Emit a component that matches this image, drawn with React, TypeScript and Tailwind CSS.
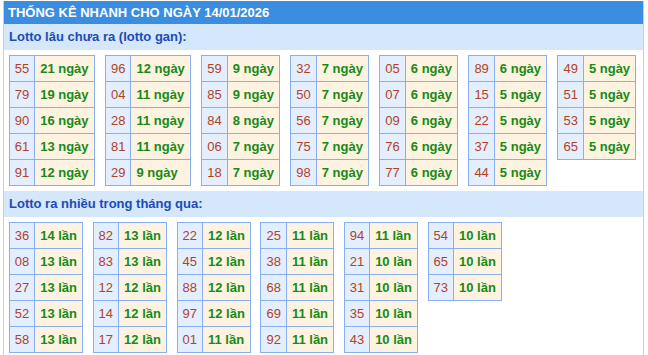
const gan: [string, string][][] = [
  [["55", "21 ngày"], ["79", "19 ngày"], ["90", "16 ngày"], ["61", "13 ngày"], ["91", "12 ngày"]],
  [["96", "12 ngày"], ["04", "11 ngày"], ["28", "11 ngày"], ["81", "11 ngày"], ["29", "9 ngày"]],
  [["59", "9 ngày"], ["85", "9 ngày"], ["84", "8 ngày"], ["06", "7 ngày"], ["18", "7 ngày"]],
  [["32", "7 ngày"], ["50", "7 ngày"], ["56", "7 ngày"], ["75", "7 ngày"], ["98", "7 ngày"]],
  [["05", "6 ngày"], ["07", "6 ngày"], ["09", "6 ngày"], ["76", "6 ngày"], ["77", "6 ngày"]],
  [["89", "6 ngày"], ["15", "5 ngày"], ["22", "5 ngày"], ["37", "5 ngày"], ["44", "5 ngày"]],
  [["49", "5 ngày"], ["51", "5 ngày"], ["53", "5 ngày"], ["65", "5 ngày"]],
];

const nhieu: [string, string][][] = [
  [["36", "14 lần"], ["08", "13 lần"], ["27", "13 lần"], ["52", "13 lần"], ["58", "13 lần"]],
  [["82", "13 lần"], ["83", "13 lần"], ["12", "12 lần"], ["14", "12 lần"], ["17", "12 lần"]],
  [["22", "12 lần"], ["45", "12 lần"], ["88", "12 lần"], ["97", "12 lần"], ["01", "11 lần"]],
  [["25", "11 lần"], ["38", "11 lần"], ["68", "11 lần"], ["69", "11 lần"], ["92", "11 lần"]],
  [["94", "11 lần"], ["21", "10 lần"], ["31", "10 lần"], ["35", "10 lần"], ["43", "10 lần"]],
  [["54", "10 lần"], ["65", "10 lần"], ["73", "10 lần"]],
];

function LotoTable({ rows }: { rows: [string, string][] }) {
  return (
    <table className="border-collapse border border-[#88aff0]">
      <tbody>
        {rows.map(([num, val]) => (
          <tr key={num}>
            <td className="border border-[#88aff0] bg-[#e3eefe] px-[5px] py-[5px] text-[13px] leading-[15px] text-[#b3421f] text-center">
              {num}
            </td>
            <td className="border border-[#88aff0] bg-[#fef3e1] px-[5px] py-[5px] text-[13px] leading-[15px] font-bold text-[#178a17] whitespace-nowrap">
              {val}
            </td>
          </tr>
        ))}
      </tbody>
    </table>
  );
}

function Section({ title, tables, gap }: { title: string; tables: [string, string][][]; gap: string }) {
  return (
    <div>
      <div className="h-[26px] bg-[#d4e7fb] pl-[5px] flex items-center text-[13px] font-bold text-[#1d4bb5]">
        {title}
      </div>
      <div className={`flex flex-wrap items-start ${gap} pl-[4.7px] pt-[5px] pb-[5px]`}>
        {tables.map((t, i) => (
          <LotoTable key={i} rows={t} />
        ))}
      </div>
    </div>
  );
}

export default function App() {
  return (
    <div className="w-[648px] h-[355px] bg-white overflow-hidden font-['Liberation_Sans',Arial,sans-serif]">
      <div className="ml-[3px] mt-px w-[641px] border-x border-[#bfd2ec] min-h-[360px]">
        <div className="h-[23px] bg-[#3a8ddf] pl-[4px] flex items-center text-[13px] font-bold text-white">
          THỐNG KÊ NHANH CHO NGÀY 14/01/2026
        </div>
        <Section title="Lotto lâu chưa ra (lotto gan):" tables={gan} gap="gap-x-[10.4px]" />
        <Section title="Lotto ra nhiều trong tháng qua:" tables={nhieu} gap="gap-x-[9.6px]" />
      </div>
    </div>
  );
}
